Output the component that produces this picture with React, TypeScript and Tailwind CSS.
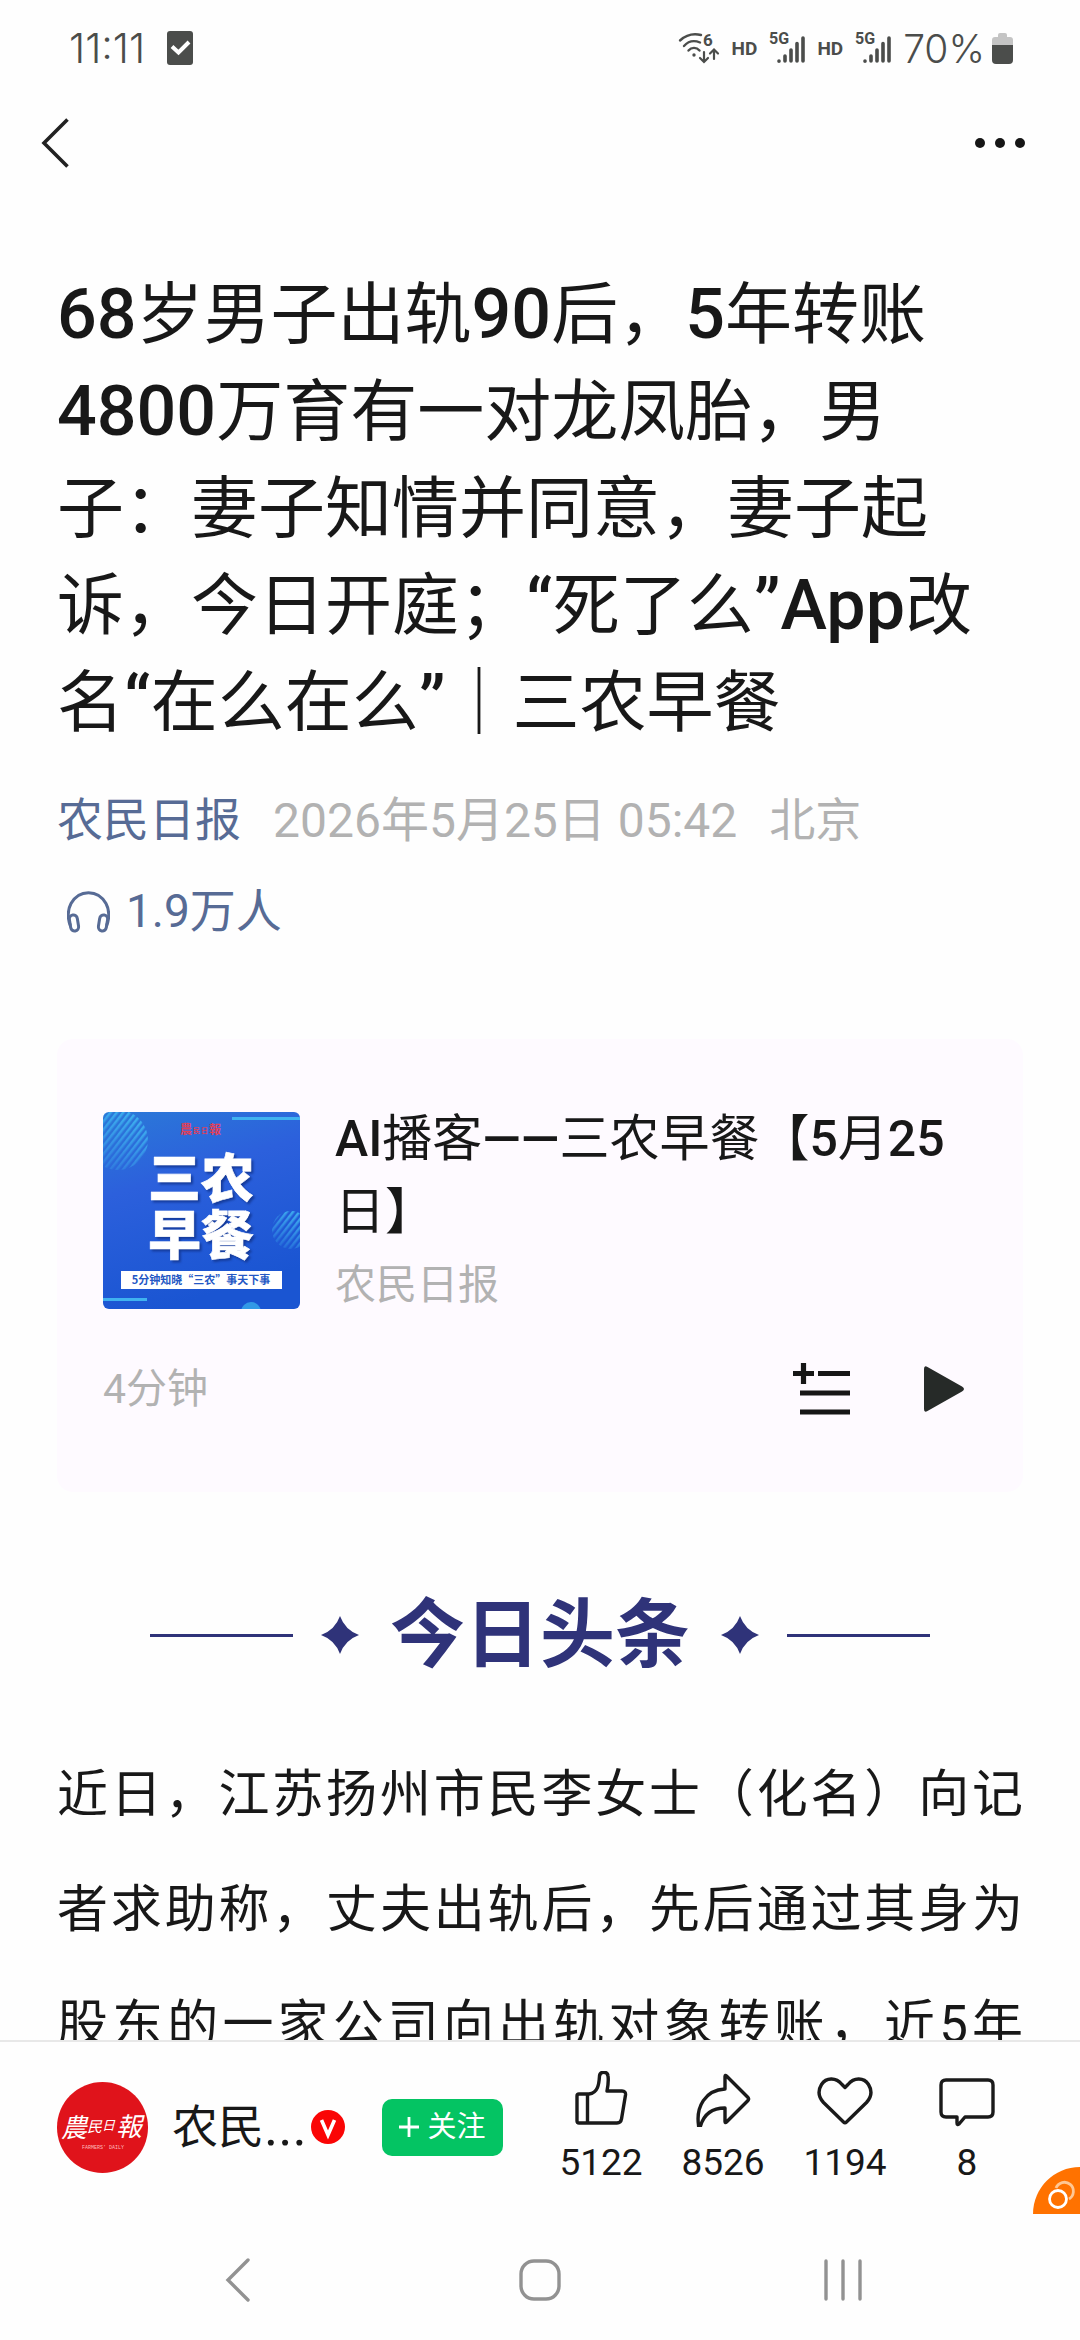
import React from "react";

function WifiIcon() {
  return (
    <svg width="42" height="44" viewBox="0 -6 42 44" fill="none" stroke="#4b4d4b" strokeWidth="2.4" strokeLinecap="round" aria-label="Wi-Fi 6">
      <path d="M2 8.500C8 3 15 1 23 3" />
      <path d="M6 14C10 9.500 16 8 22 10.500" />
      <path d="M10.500 18.500C13.500 15 18.500 15 21.500 18.500" />
      <circle cx="16" cy="23" r="1.700" fill="#4b4d4b" stroke="none" />
      <path d="M26 20v9M22 26l4 4 4-4M36 27v-9M32 21.500l4-4 4 4" strokeWidth="2.2" />
      <text x="25" y="14" fontSize="17" fontWeight="700" fontFamily="Roboto, sans-serif" fill="#4b4d4b" stroke="none">6</text>
    </svg>
  );
}

function SignalIcon() {
  return (
    <svg width="36" height="44" viewBox="0 -6 36 44" aria-label="5G">
      <text x="0" y="12" fontSize="16" fontWeight="700" fontFamily="Roboto, sans-serif" fill="#4b4d4b">5G</text>
      <g stroke="#4b4d4b" strokeWidth="3.6" strokeLinecap="round">
        <path d="M10 29v.2M16 24v5M22 18v11M28 11.500v17.500M34 6v23" />
      </g>
    </svg>
  );
}

function StatusBar() {
  return (
    <div className="flex h-24 shrink-0 items-center justify-between pr-[67px] pl-[69px] text-[#4b4d4b]">
      <div className="flex items-center gap-[22px]">
        <span className="font-[Inter,sans-serif] text-[41px] leading-none font-light">11:11</span>
        <svg width="26" height="34" viewBox="0 0 26 34" aria-hidden="true">
          <rect width="26" height="34" rx="3" fill="#4b4d4b" />
          <path d="M5 15.500l6.500 6L22 11" fill="none" stroke="#fff" strokeWidth="4" />
        </svg>
      </div>
      <div className="flex items-center gap-3">
        <WifiIcon />
        <span className="text-[19px] leading-none font-bold">HD</span>
        <SignalIcon />
        <span className="text-[19px] leading-none font-bold">HD</span>
        <SignalIcon />
        <div className="flex items-center gap-[7px]">
          <span className="font-[Inter,sans-serif] text-[39px] leading-none font-light">70%</span>
          <svg width="21" height="31" viewBox="0 0 21 31" aria-hidden="true">
            <path d="M6 2q0-2 2-2h5q2 0 2 2v2h3q3 0 3 3v5H0V7q0-3 3-3h3z" fill="#c4c4c4" />
            <path d="M0 12h21v15q0 4-4 4H4q-4 0-4-4z" fill="#4b4d4b" />
          </svg>
        </div>
      </div>
    </div>
  );
}

function Header() {
  return (
    <header className="flex h-[94px] shrink-0 items-center justify-between pr-[54px] pl-10">
      <button type="button" aria-label="返回">
        <svg width="30" height="50" viewBox="0 0 30 50" fill="none" stroke="#222" strokeWidth="3.600">
          <path d="M27.500 1.500L4 25l23.500 23.500" />
        </svg>
      </button>
      <button type="button" aria-label="更多">
        <svg width="52" height="12" viewBox="0 0 52 12" fill="#161616">
          <circle cx="6" cy="6" r="5" />
          <circle cx="26" cy="6" r="5" />
          <circle cx="46" cy="6" r="5" />
        </svg>
      </button>
    </header>
  );
}

function Cover() {
  return (
    <svg className="mt-[9px] shrink-0 rounded-md" width="197" height="197" viewBox="0 0 197 197" fontFamily="Noto Sans CJK SC, sans-serif" fontWeight="700">
      <defs>
        <linearGradient id="sky" x1="0" y1="0" x2="0.3" y2="1">
          <stop offset="0" stopColor="#2b79d8" />
          <stop offset="0.4" stopColor="#2c60dc" />
          <stop offset="1" stopColor="#1a55d2" />
        </linearGradient>
        <pattern id="stripes" width="5" height="5" patternUnits="userSpaceOnUse" patternTransform="rotate(38)">
          <rect width="2.500" height="5" fill="#3fb2f0" />
        </pattern>
        <linearGradient id="fade" x1="0.8" y1="0" x2="0.2" y2="1">
          <stop offset="0" stopColor="#fff" />
          <stop offset="1" stopColor="#fff" stopOpacity="0.2" />
        </linearGradient>
        <mask id="soft">
          <circle cx="15" cy="28" r="30" fill="url(#fade)" />
          <circle cx="188" cy="118" r="19" fill="url(#fade)" />
        </mask>
      </defs>
      <rect width="197" height="197" fill="url(#sky)" />
      <rect width="197" height="197" fill="url(#stripes)" mask="url(#soft)" />
      <rect x="129" y="5" width="68" height="3" fill="#3fb2f0" />
      <rect x="0" y="186" width="44" height="3" fill="#3fb2f0" />
      <circle cx="148" cy="200" r="10" fill="#3299e6" />
      <g fill="#e0405a">
        <text x="77" y="22" fontSize="12">農</text>
        <text x="90" y="21" fontSize="7">民</text>
        <text x="98" y="21" fontSize="7">日</text>
        <text x="106" y="22" fontSize="12">報</text>
      </g>
      <g fontSize="53" fontWeight="900" fill="#fff" stroke="#fff" strokeWidth="0.6" className="drop-shadow-[2px_2px_1px_#143a99]">
        <text x="45" y="86">三农</text>
        <text x="45" y="143">早餐</text>
      </g>
      <rect x="18" y="159" width="161" height="18" fill="#fff" />
      <text x="98" y="172" fontSize="11" textAnchor="middle" fill="#2457c4">5分钟知晓“三农”事天下事</text>
    </svg>
  );
}

function PodcastCard() {
  return (
    <section className="mt-[82px] rounded-2xl bg-[#fefaff] px-[46px] pt-16 pb-[73px]">
      <div className="flex items-start gap-[35px]">
        <Cover />
        <div className="min-w-0 flex-1">
          <h2 className="text-[50px] leading-[73px]">
            <span className="font-medium">AI</span>播客<span className="font-medium">——</span>三农早餐【<span className="font-medium">5</span>月<span className="font-medium">25</span>日】
          </h2>
          <p className="text-[41px] leading-[72px] text-[#b2b2b2]">农民日报</p>
        </div>
      </div>
      <div className="mt-[38px] flex h-[60px] items-center justify-between">
        <span className="text-[41px] leading-none text-[#b2b2b2]">4分钟</span>
        <div className="flex items-center gap-[72px] pr-3">
          <button type="button" aria-label="加入播放列表">
            <svg width="58" height="54" viewBox="0 0 58 54" stroke="#161616" strokeWidth="5.200">
              <path d="M0 11.500h21M10.500 1v21M25 11.500h32M7 31h50M7 50h50" />
            </svg>
          </button>
          <button type="button" aria-label="播放">
            <svg width="42" height="48" viewBox="0 0 42 48" fill="#262a28">
              <path d="M1 4q0-4 3.500-2L39 21.500q4 2.500 0 5L4.500 46Q1 48 1 44z" />
            </svg>
          </button>
        </div>
      </div>
    </section>
  );
}

function Star() {
  return (
    <svg className="shrink-0" width="38" height="38" viewBox="0 0 38 38" fill="#2f3379" aria-hidden="true">
      <path d="M19 0Q24 14 38 19Q24 24 19 38Q14 24 0 19Q14 14 19 0z" />
    </svg>
  );
}

function SectionHeading() {
  return (
    <div className="mt-[93px] flex items-center justify-center gap-7 text-[#2f3379]">
      <span className="h-[3px] w-[143px] bg-[#2f3379]" />
      <Star />
      <h2 className="px-[3px] text-[75px] leading-[100px] font-bold">今日头条</h2>
      <Star />
      <span className="h-[3px] w-[143px] bg-[#2f3379]" />
    </div>
  );
}

function Latin({ children }: { children: string }) {
  return <span className="text-[70px] leading-none font-medium">{children}</span>;
}

function Article() {
  return (
    <main className="min-h-0 flex-1 overflow-hidden px-[57px] pt-[77px]">
      <h1 className="text-[67px] leading-[97px]">
        <Latin>68</Latin>岁男子出轨<Latin>90</Latin>后，<Latin>5</Latin>年转账
        <br />
        <Latin>4800</Latin>万育有一对龙凤胎，男
        <br />
        子：妻子知情并同意，妻子起
        <br />
        诉，今日开庭；<Latin>“</Latin>死了么<Latin>”App</Latin>改
        <br />
        名<Latin>“</Latin>在么在么<Latin>”</Latin>｜三农早餐
      </h1>
      <div className="mt-[23px] flex items-center gap-8 text-[46px] leading-[91px] text-[#b2b2b2]">
        <a href="#account" className="text-[#576b95]">农民日报</a>
        <span className="text-[48px]">2026年5月25日 05:42</span>
        <span>北京</span>
      </div>
      <button type="button" className="flex items-center gap-4 pl-[10px] text-[46px] leading-[91px] text-[#576b95]">
        <svg width="43" height="42" viewBox="0 0 43 42" fill="none" stroke="#576b95" strokeWidth="3">
          <path d="M3.500 35C0 27 1 18 4 12.500C12-2 31-2 39 12.500C42 18 43 27 39.500 35" />
          <rect x="3" y="24" width="8" height="16" rx="4" transform="rotate(-9 7 32)" />
          <rect x="32" y="24" width="8" height="16" rx="4" transform="rotate(9 36 32)" />
        </svg>
        1.9万人
      </button>
      <PodcastCard />
      <SectionHeading />
      <p className="mt-[52px] text-justify text-[51px] leading-[115px] [text-align-last:justify]">
        近日，江苏扬州市民李女士（化名）向记者求助称，丈夫出轨后，先后通过其身为股东的一家公司向出轨对象转账，近5年
      </p>
    </main>
  );
}

function Action({ label, count, children }: { label: string; count: string; children: React.ReactNode }) {
  return (
    <button type="button" aria-label={label} className="flex w-[122px] flex-col items-center gap-4">
      <svg width="56" height="56" viewBox="0 0 56 56" fill="none" stroke="#1a1a1a" strokeWidth="3.400" strokeLinejoin="round">
        {children}
      </svg>
      <span className="text-[37px] leading-10">{count}</span>
    </button>
  );
}

function ActionBar() {
  return (
    <div className="relative flex h-[180px] items-center border-t-2 border-[#e8e8e8] pr-[52px] pb-2 pl-[57px]">
      <svg className="shrink-0 rounded-full" width="91" height="91" viewBox="0 0 91 91" fontFamily="Noto Sans CJK SC, sans-serif">
        <rect width="91" height="91" fill="#e0131b" />
        <g fill="#fff">
          <text x="4" y="55" fontSize="26" fontStyle="italic">農</text>
          <text x="30" y="50" fontSize="15" fontStyle="italic">民</text>
          <text x="45" y="48" fontSize="13" fontStyle="italic">日</text>
          <text x="59" y="54" fontSize="26" fontStyle="italic">報</text>
        </g>
        <text x="46" y="67" fontSize="5" textAnchor="middle" fill="#fbb" fontFamily="Liberation Mono, monospace">FARMERS’ DAILY</text>
      </svg>
      <a href="#account" className="ml-6 flex shrink-0 items-center text-[46px] leading-none">
        农民<span className="text-[54px] leading-none">...</span>
        <svg className="ml-1" width="34" height="34" viewBox="0 0 34 34" aria-label="已认证">
          <circle cx="17" cy="17" r="17" fill="#fa0505" />
          <path d="M10.500 10l6.500 15 6.500-15" fill="none" stroke="#fff" strokeWidth="3.600" />
        </svg>
      </a>
      <button type="button" className="ml-auto flex h-[57px] w-[121px] shrink-0 items-center justify-center gap-2 rounded-[10px] bg-[#04c463] text-[29px] leading-none text-white">
        <svg width="20" height="20" viewBox="0 0 20 20" stroke="#fff" strokeWidth="2.800" aria-hidden="true">
          <path d="M10 0v20M0 10h20" />
        </svg>
        关注
      </button>
      <div className="ml-[37px] flex shrink-0">
        <Action label="点赞" count="5122">
          <path d="M4 25q0-2 2-2h10c9-1 10-10 10.500-18c.5-5 8-5 8.500 0c.8 6 0 10-1 15h15q4 0 3.500 4l-4 24q-.7 4-4.500 4H6q-2 0-2-2zM14.500 23.500V52" />
        </Action>
        <Action label="分享" count="8526">
          <path d="M30 5.500q0-2 1.500-.5L53 26.500q1.200 1.500 0 3L31.500 51q-1.500 1.500-1.500-.5V37C18 37 9 43 5.500 55q-2 3-2-1C1 36 10 19 30 18z" />
        </Action>
        <Action label="喜欢" count="1194">
          <path d="M28 16.500l-3-3C19 6 9 6.500 4.500 13.500c-4 6.500-2.500 13 2 18l20 19.500q1.500 1.400 3 0l20-19.500c4.500-5 6-11.500 2-18C47 6.500 37 6 31 13.500z" />
        </Action>
        <Action label="评论" count="8">
          <path d="M7 9h42q5 0 5 5v27q0 5-5 5H26l-6 7q-2 1.500-2-1v-6H7q-5 0-5-5V14q0-5 5-5z" />
        </Action>
      </div>
      <button type="button" aria-label="悬浮窗" className="absolute right-0 bottom-[6px]">
        <svg width="47" height="47" viewBox="0 0 47 47" fill="none">
          <path d="M0 47C0 21 21 0 47 0V47z" fill="#ff7200" />
          <path d="M23 21a9 9 0 1 1 13 11" stroke="#ffc794" strokeWidth="2.800" />
          <circle cx="25" cy="32" r="8.500" stroke="#fff" strokeWidth="2.800" />
        </svg>
      </button>
    </div>
  );
}

function SystemNav() {
  return (
    <nav className="flex h-[120px] items-center justify-between px-[217px]">
      <button type="button" aria-label="系统返回">
        <svg width="42" height="44" viewBox="0 0 42 44" fill="none" stroke="#929292" strokeWidth="3.400" strokeLinecap="round">
          <path d="M31 2L11 22l20 20" />
        </svg>
      </button>
      <button type="button" aria-label="主屏幕">
        <svg width="42" height="44" viewBox="0 0 42 44" fill="none" stroke="#929292" strokeWidth="3.400">
          <rect x="2" y="3" width="38" height="38" rx="13" />
        </svg>
      </button>
      <button type="button" aria-label="最近任务">
        <svg width="42" height="44" viewBox="0 0 42 44" fill="none" stroke="#929292" strokeWidth="3.400" strokeLinecap="round">
          <path d="M5 3v38M22 3v38M39 3v38" />
        </svg>
      </button>
    </nav>
  );
}

export default function App() {
  return (
    <div lang="zh-CN" className="flex h-screen flex-col bg-[#fefefe] font-[Roboto,'Noto_Sans_CJK_SC',sans-serif] text-[#181818]">
      <StatusBar />
      <Header />
      <Article />
      <footer className="shrink-0">
        <ActionBar />
        <SystemNav />
      </footer>
    </div>
  );
}
